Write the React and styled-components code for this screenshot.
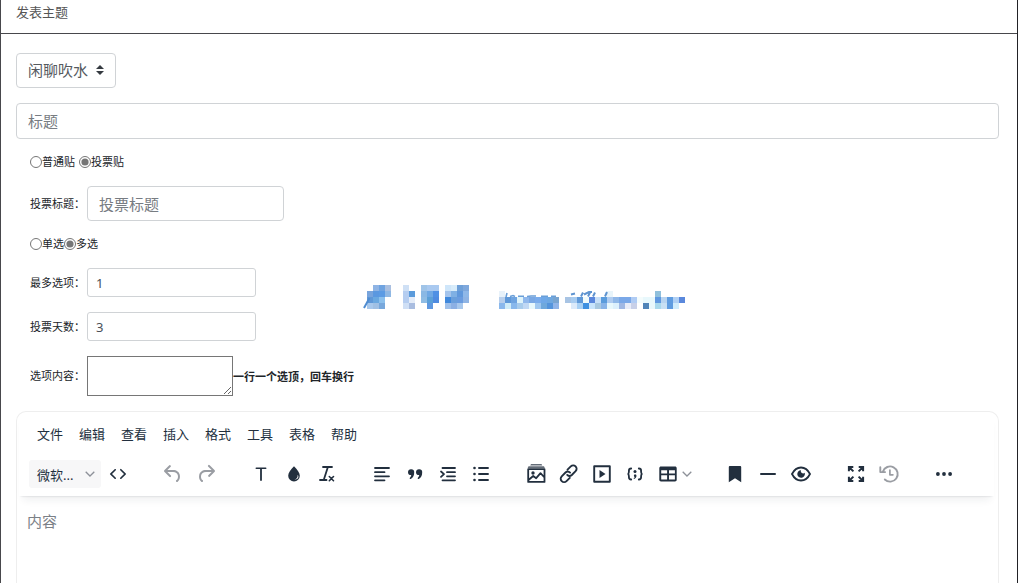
import React from "react";
import styled, { createGlobalStyle } from "styled-components";

const GlobalStyle = createGlobalStyle`
* { box-sizing: border-box; }
body {
  margin: 0;
  background: #fff;
  color: #212529;
  font-family: "Noto Sans", "Noto Sans CJK SC", sans-serif;
}
button, input, select, textarea { font-family: inherit; }
`;

const icons = {
  code: <path d="M9.8 15.7c.3.3.3.8 0 1-.3.4-.9.4-1.2 0l-4.4-4.1a.8.8 0 0 1 0-1.2l4.4-4.2c.3-.3.9-.3 1.2 0 .3.3.3.8 0 1.1L6 12l3.8 3.7zM14.2 15.7c-.3.3-.3.8 0 1 .4.4.9.4 1.2 0l4.4-4.1c.3-.3.3-.9 0-1.2l-4.4-4.2a.8.8 0 0 0-1.2 0c-.3.3-.3.8 0 1.1L18 12l-3.8 3.7z" />,
  undo: <path d="M6.4 8H12c3.7 0 6.2 2 6.8 5.1.6 2.7-.4 5.6-2.3 6.8a1 1 0 0 1-1-1.8c1.1-.6 1.8-2.7 1.4-4.6-.5-2.1-2.1-3.5-4.9-3.5H6.4l3.3 3.3a1 1 0 1 1-1.4 1.4l-5-5a1 1 0 0 1 0-1.4l5-5a1 1 0 0 1 1.4 1.4L6.4 8z" />,
  redo: <path d="M17.6 10H12c-2.8 0-4.4 1.4-4.9 3.5-.4 2 .3 4 1.4 4.6a1 1 0 1 1-1 1.8c-2-1.2-2.9-4.1-2.3-6.8.6-3 3-5.1 6.8-5.1h5.6l-3.3-3.3a1 1 0 1 1 1.4-1.4l5 5a1 1 0 0 1 0 1.4l-5 5a1 1 0 0 1-1.4-1.4l3.3-3.3z" />,
  text: <path d="M7.300 5.400h9.400a.8.8 0 0 1 0 1.600H12.900V18a.9.9 0 0 1-1.800 0V7H7.300a.8.8 0 0 1 0-1.600z" />,
  drop: <path fillRule="evenodd" d="M12 4.300c3.400 3.600 5.800 6.300 5.800 9.400a5.800 5.800 0 0 1-11.600 0c0-3.100 2.400-5.800 5.800-9.400zM15.600 13c.4 2.300-.9 4-3.200 4.500 1.800.5 4.200-.9 4-3 0-.7-.3-1.200-.8-1.500z" />,
  clear: (
    <g fill="none" stroke="currentColor" strokeLinecap="round">
      <path strokeWidth="1.800" d="M8 5h9M5 18h6.500M12.800 5.300 8.800 17.700" />
      <path strokeWidth="1.600" d="m14.300 14.500 4.200 4.200M18.500 14.500l-4.200 4.200" />
    </g>
  ),
  align: <path fill="none" stroke="currentColor" strokeWidth="1.800" strokeLinecap="round" d="M5 6h14M5 10.200h9.500M5 14.300h14M5 18.300h9.500" />,
  quote: <path d="M7.900 7.200h.5c1.700 0 2.800 1 2.800 2.800 0 3.500-.9 5.800-3.400 6.900-.9.4-1.600-.5-.9-1.100.8-.7 1.200-1.600 1.400-2.700-2 .1-3.300-1-3.300-2.900 0-1.800 1.200-3 2.900-3zM15.900 7.200h.5c1.700 0 2.800 1 2.800 2.800 0 3.500-.9 5.800-3.400 6.900-.9.4-1.600-.5-.9-1.100.8-.7 1.200-1.600 1.400-2.700-2 .1-3.300-1-3.300-2.900 0-1.800 1.200-3 2.900-3z" />,
  indent: (
    <g fill="none" stroke="currentColor" strokeLinecap="round">
      <path strokeWidth="1.800" d="M6.500 6H19M11 10.200h8M11 14.300h8M6.500 18.300H19" />
      <path strokeWidth="1.800" strokeLinejoin="round" d="m5 9.500 3 2.700-3 2.700" />
    </g>
  ),
  list: (
    <g>
      <path fill="none" stroke="currentColor" strokeWidth="1.900" strokeLinecap="round" d="M10 6h9M10 12h9M10 18h9" />
      <circle cx="5.500" cy="6" r="1.300" /><circle cx="5.500" cy="12" r="1.300" /><circle cx="5.500" cy="18" r="1.300" />
    </g>
  ),
  image: (
    <g>
      <path opacity=".7" d="M7 2h10.500l.8 1.500H6.200zM4.500 4.200h15.500l.8 1.900H3.700z" />
      <path fill="none" stroke="currentColor" strokeWidth="1.800" strokeLinejoin="round" d="M4.200 7.200h16.300v12.700H4.200zM4.500 18l4.700-4 3 2.200 4.300-5 4 4.300" />
      <circle cx="9" cy="11" r="1.700" />
    </g>
  ),
  link: (
    <path fill="none" stroke="currentColor" strokeWidth="1.900" strokeLinecap="round" d="m10.500 7.700 3.300-3.300a3.300 3.300 0 0 1 4.800 4.800l-3.800 3.800a3.300 3.300 0 0 1-4.600-.1M12.800 15.800l-3.300 3.300a3.300 3.300 0 0 1-4.800-4.800l3.800-3.800a3.300 3.300 0 0 1 4.600.1" />
  ),
  media: (
    <g>
      <path fill="none" stroke="currentColor" strokeWidth="1.900" strokeLinejoin="round" d="M4.200 4.200h15.600v15.600H4.200z" />
      <path d="M9.500 8v8l6-4z" />
    </g>
  ),
  sample: (
    <g>
      <path fill="none" stroke="currentColor" strokeWidth="1.800" strokeLinecap="round" d="M8.200 6.500c-1.700 0-2.300.8-2.300 2.200v1.400c0 1-.3 1.700-1.200 1.900.9.200 1.200.9 1.200 1.900v1.400c0 1.400.6 2.200 2.300 2.200M15.800 6.500c1.700 0 2.300.8 2.300 2.200v1.400c0 1 .3 1.700 1.200 1.900-.9.200-1.200.9-1.200 1.900v1.400c0 1.400-.6 2.200-2.300 2.200" />
      <circle cx="12" cy="9.500" r="1.500" />
      <path d="M12 12.300a1.500 1.500 0 0 1 1.500 1.500c0 1.400-1 2.700-2.500 3.200l-.4-.7c.7-.4 1-.7 1.100-1.200a1.500 1.500 0 0 1 .3-2.800z" />
    </g>
  ),
  table: <path fillRule="evenodd" d="M5 4.500h14c1 0 1.700.7 1.700 1.700v11.600c0 1-.7 1.700-1.700 1.700H5c-1 0-1.700-.7-1.700-1.700V6.200c0-1 .7-1.700 1.700-1.700zM5.200 8.300v3.100h5.900V8.300zM13 8.300v3.100h5.900V8.300zM5.200 13.300v4.300h5.900v-4.300zM13 13.300v4.300h5.900v-4.300z" />,
  bookmark: <path d="M6.700 4.100h10.600c.5 0 .9.400.9.900v15.300L12 16.200l-6.200 4.100V5c0-.5.400-.9.900-.9z" />,
  line: <path d="M5 11h14a1 1 0 0 1 0 2H5a1 1 0 0 1 0-2z" />,
  eye: (
    <g>
      <path fill="none" stroke="currentColor" strokeWidth="1.800" d="M3 12c2.100-4.200 5.300-6.500 9-6.500s6.900 2.300 9 6.500c-2.100 4.200-5.300 6.500-9 6.500S5.100 16.200 3 12z" />
      <path d="M12 8.200a2.300 2.300 0 0 0 3.700 2.600A3.800 3.800 0 1 1 12 8.200z" />
    </g>
  ),
  full: <path fill="none" stroke="currentColor" strokeWidth="2" d="M4.900 9.300V4.900h4.400M5.200 5.200l4.200 4.200M14.700 4.900h4.400v4.400M18.800 5.200l-4.200 4.200M4.900 14.700v4.400h4.400M5.200 18.800l4.200-4.200M14.700 19.100h4.400v-4.400M18.800 18.800l-4.200-4.200" />,
  history: (
    <g fill="none" stroke="currentColor" strokeWidth="1.900" strokeLinecap="round" strokeLinejoin="round">
      <path d="M5.900 9.600a7.600 7.600 0 1 1 1.900 7.900M3.300 5.300v4.800h4.800" />
      <path strokeWidth="1.700" d="M12.900 8.200v4.600h3" />
    </g>
  ),
  more: <g><circle cx="5.900" cy="12" r="1.900" /><circle cx="12" cy="12" r="1.900" /><circle cx="18.100" cy="12" r="1.900" /></g>,
};

const menus = ["文件", "编辑", "查看", "插入", "格式", "工具", "表格", "帮助"];

const groups = [
  [["undo", "撤销", true], ["redo", "重做", true]],
  [["text", "文字颜色"], ["drop", "背景色"], ["clear", "清除格式"]],
  [["align", "左对齐"], ["quote", "引用"], ["indent", "增加缩进"], ["list", "项目符号"]],
  [["image", "图片"], ["link", "链接"], ["media", "媒体"], ["sample", "代码示例"], ["table", "表格"]],
  [["bookmark", "锚点"], ["line", "水平线"], ["eye", "预览"]],
  [["full", "全屏"], ["history", "恢复草稿", true]],
  [["more", "更多"]],
];

// [x, y, "colour colour ..."], "-" leaves a cell empty
const mosaic = [
  [6, 0, "8fb4e4 6fa3e0 a9bfe0 - - cfe0f5 - - a0c4e8 a9c9f0 a9c9f0 - cfe6fa d8ecfa 6fa0d8 7fa8dc"],
  [0, 6, "78a4dc 5b98e0 5b9be4 8fb8e4 - - b5cdf0 5b9bdb - 8ab8e4 6fa8e4 4f90e4 - a4c4ec 7fb0e4 6098dc 8fb8e8"],
  [0, 12, "5f98d8 6aa8e0 8cc0ec - - - b5cdf0 e4ecf8 - 8fbce4 5ba0d8 4f8be0 - 3f88dc 6a9fdc 6a9ce0 8fb4e4"],
  [0, 18, "a8c8ec a0c0e4 78a8dc - - - cfdff5 a9bde0 - - 5f98e0 - - 9fc0ea 8cb0e4 a8c8ec"],
  [132, 6, "e8f2fa - - - - - - - - - - - - - - - - - e8f4fa - - - - - - - 90c0dc"],
  [132, 12, "b8cfec 5f98d8 6fa4e0 e0f4fa 90b8ec 7aa8e4 7aacec 6fa8e8 6fa8e0 78a4d0 - a8c4e4 a8ccf0 5f98d8 f0fafa 5a86dc c8e0f8 5a9cdc b0ccf0 90b8e8 7aa8e8 7aa8e8 b0ccf4 f4fcfc e8f8fc e8f8fc 5f98e0 b8d4f0 5f9ce0 b0d0f4 5a88dc"],
  [132, 18, "8ab8ec d0ecf8 88b8ec a8ccec c0d8f4 e8f8fc a0c8f0 6fa8dc 5494dc 90b4e8 - - dceafa a8d0f4 3f90e0 c8e4fc a8c8e0 88b4e8 e8f8fc dcf0fc a0b8e4 e8ecf8 c8d0e8 - 5084b8 e8f8fc a8d8ec c8e0f4 5f9ce0 d0ecfc"],
];

const Icon = ({ name }) => (
  <svg width="24" height="24" viewBox="0 0 24 24" fill="currentColor" aria-hidden="true">{icons[name]}</svg>
);

const Chevron = () => (
  <svg width="10" height="6" viewBox="0 0 10 6" fill="none" stroke="#8d9199" strokeWidth="1.300" aria-hidden="true">
    <path d="M.7.7 5 5 9.300.7" />
  </svg>
);

const Watermark = () => (
  <WatermarkArt viewBox="-4 0 322 24" aria-hidden="true">
    <g shapeRendering="crispEdges">
      {mosaic.map(([x, y, cells]) =>
        cells.split(" ").map((c, i) => c !== "-" && (
          <rect key={`${x}-${y}-${i}`} x={x + i * 6} y={y} width="6" height="6" fill={`#${c}`} />
        ))
      )}
    </g>
    <path fill="none" stroke="#4f8cd0" strokeWidth="2" d="M-3 23 2.500 13" />
    <path fill="none" stroke="#6a9fd8" strokeWidth="1.600" d="m139 12 1-4M143 11.500l3-1 2 1M151 11.200h6M160 11.500l4-.5h5M174 11.300h7M184 11.300h5" />
    <path fill="none" stroke="#5f94d0" strokeWidth="2" d="m204 9.500 4-1M214 11.500l2-4M217 9.500l5-2.500h3M221 11.500l2-4M226 11.500l2-4M238 11.500l2-4.500" />
  </WatermarkArt>
);

const App = () => {
  return (
    <Page>
      <GlobalStyle />
      <Header>发表主题</Header>
      <Form>
        <ForumPicker>
          <ForumSelect aria-label="版块">
            <option>闲聊吹水</option>
          </ForumSelect>
          <SelectArrows viewBox="0 0 8 10" aria-hidden="true"><path d="M4 0 0 4h8zM4 10 0 6h8z" /></SelectArrows>
        </ForumPicker>
        <TitleInput aria-label="标题" placeholder="标题" />
        <Poll>
          <Radios $gap="4px">
            <RadioLabel><Radio name="kind" />普通贴</RadioLabel>
            <RadioLabel><Radio name="kind" defaultChecked />投票贴</RadioLabel>
          </Radios>
          <Row>
            <Label htmlFor="poll-title">投票标题：</Label>
            <TextInput id="poll-title" placeholder="投票标题" />
          </Row>
          <Radios>
            <RadioLabel><Radio name="choice" />单选</RadioLabel>
            <RadioLabel><Radio name="choice" defaultChecked />多选</RadioLabel>
          </Radios>
          <Row>
            <Label htmlFor="poll-max">最多选项：</Label>
            <TextInput id="poll-max" $small defaultValue="1" />
          </Row>
          <Row>
            <Label htmlFor="poll-days">投票天数：</Label>
            <TextInput id="poll-days" $small defaultValue="3" />
          </Row>
          <Row>
            <Label htmlFor="poll-options">选项内容：</Label>
            <Options id="poll-options" />
            <Hint>一行一个选顶，回车换行</Hint>
          </Row>
          <Watermark />
        </Poll>
        <Editor>
          <EditorHeader>
            <MenuBar>
              {menus.map((m) => <MenuButton key={m} type="button">{m}</MenuButton>)}
            </MenuBar>
            <ToolBar>
              <Group>
                <FontButton type="button">微软...<Chevron /></FontButton>
                <ToolButton type="button" aria-label="源代码"><Icon name="code" /></ToolButton>
              </Group>
              {groups.map((group) => (
                <Group key={group[0][0]}>
                  {group.map(([name, label, muted]) => (
                    <ToolButton key={name} type="button" aria-label={label} $muted={muted}>
                      <Icon name={name} />
                      {name === "table" && <Chevron />}
                    </ToolButton>
                  ))}
                </Group>
              ))}
            </ToolBar>
          </EditorHeader>
          <Content aria-label="内容" placeholder="内容" />
        </Editor>
      </Form>
    </Page>
  );
};

export default App;

const Page = styled.div`
display: flex;
flex-direction: column;
min-height: 100vh;
border-left: 1px solid #48484c;
border-right: 1px solid #222226;
`;

const Header = styled.header`
padding: 2px 15px 11px;
border-bottom: 1px solid #48484c;
color: #555;
font-size: 13px;
line-height: 20px;
`;

const Form = styled.form`
display: flex;
flex: 1;
flex-direction: column;
padding: 19px 18px 0 15px;
`;

const ForumPicker = styled.div`
position: relative;
align-self: flex-start;
margin-bottom: 15px;
`;

const ForumSelect = styled.select`
display: block;
width: 100px;
height: 35px;
padding: 0 11px 2px;
appearance: none;
background: #fff;
border: 1px solid #d0d3d6;
border-radius: 4px;
color: #55595e;
font-size: 15px;
`;

const SelectArrows = styled.svg`
position: absolute;
top: 12px;
right: 12px;
width: 8px;
height: 10px;
fill: #343a40;
pointer-events: none;
`;

const TextInput = styled.input`
width: ${(p) => (p.$small ? "169px" : "197px")};
height: ${(p) => (p.$small ? "29px" : "35px")};
padding: 0 ${(p) => (p.$small ? "8px" : "11px")};
border: 1px solid #d0d3d6;
border-radius: ${(p) => (p.$small ? "3px" : "4px")};
color: #495057;
font-size: ${(p) => (p.$small ? "13px" : "15px")};
&::placeholder { color: #777c82; }
`;

const TitleInput = styled(TextInput)`
width: 100%;
height: 36px;
`;

const Poll = styled.div`
position: relative;
display: flex;
flex-direction: column;
gap: 15px;
padding: 15px 14px;
font-size: 11px;
`;

const Radios = styled.div`
display: flex;
gap: ${(p) => p.$gap || "0"};
height: 17px;
line-height: 16px;
`;

const RadioLabel = styled.label`
display: flex;
align-items: center;
height: 16px;
`;

const Radio = styled.input.attrs({ type: "radio" })`
width: 12px;
height: 12px;
margin: 0;
accent-color: #767676;
`;

const Row = styled.div`
display: flex;
align-items: center;
`;

const Label = styled.label`
width: 57px;
padding-bottom: 2px;
white-space: nowrap;
`;

const Options = styled.textarea`
width: 146px;
height: 40px;
border: 1px solid #767676;
`;

const Hint = styled.strong`
font-weight: 700;
`;

const WatermarkArt = styled.svg`
position: absolute;
top: 146px;
left: 347px;
width: 322px;
height: 24px;
pointer-events: none;
`;

const Editor = styled.section`
display: flex;
flex: 1;
flex-direction: column;
border: 1px solid #eee;
border-bottom: 0;
border-radius: 10px 10px 0 0;
color: #222f3e;
`;

const EditorHeader = styled.div`
margin: 0 4px 0 2px;
padding: 7px 0 4px;
box-shadow: 0 2px 2px -2px rgba(34, 47, 62, 0.2), 0 8px 8px -4px rgba(34, 47, 62, 0.07);
`;

const MenuBar = styled.div`
display: flex;
padding-left: 10px;
`;

const MenuButton = styled.button`
height: 28px;
padding: 0 8px;
border: 0;
background: none;
color: #222f3e;
font-size: 13px;
`;

const ToolBar = styled.div`
display: flex;
gap: 22px;
padding: 13px 0 4px 10px;
`;

const Group = styled.div`
display: flex;
`;

const FontButton = styled.button`
display: flex;
align-items: center;
justify-content: space-between;
width: 72px;
height: 28px;
padding: 0 6px 0 8px;
border: 0;
border-radius: 3px;
background: #f7f7f8;
color: #222f3e;
font-size: 13px;
`;

const ToolButton = styled.button`
display: flex;
align-items: center;
gap: 2px;
min-width: 33px;
height: 28px;
padding: 0 4px 0 5px;
border: 0;
background: none;
color: ${(p) => (p.$muted ? "#9a9da3" : "#222f3e")};
`;

const Content = styled.textarea`
flex: 1;
padding: 14px 10px;
border: 0;
background: none;
resize: none;
font-size: 15px;
&::placeholder { color: #7b8087; }
`;
